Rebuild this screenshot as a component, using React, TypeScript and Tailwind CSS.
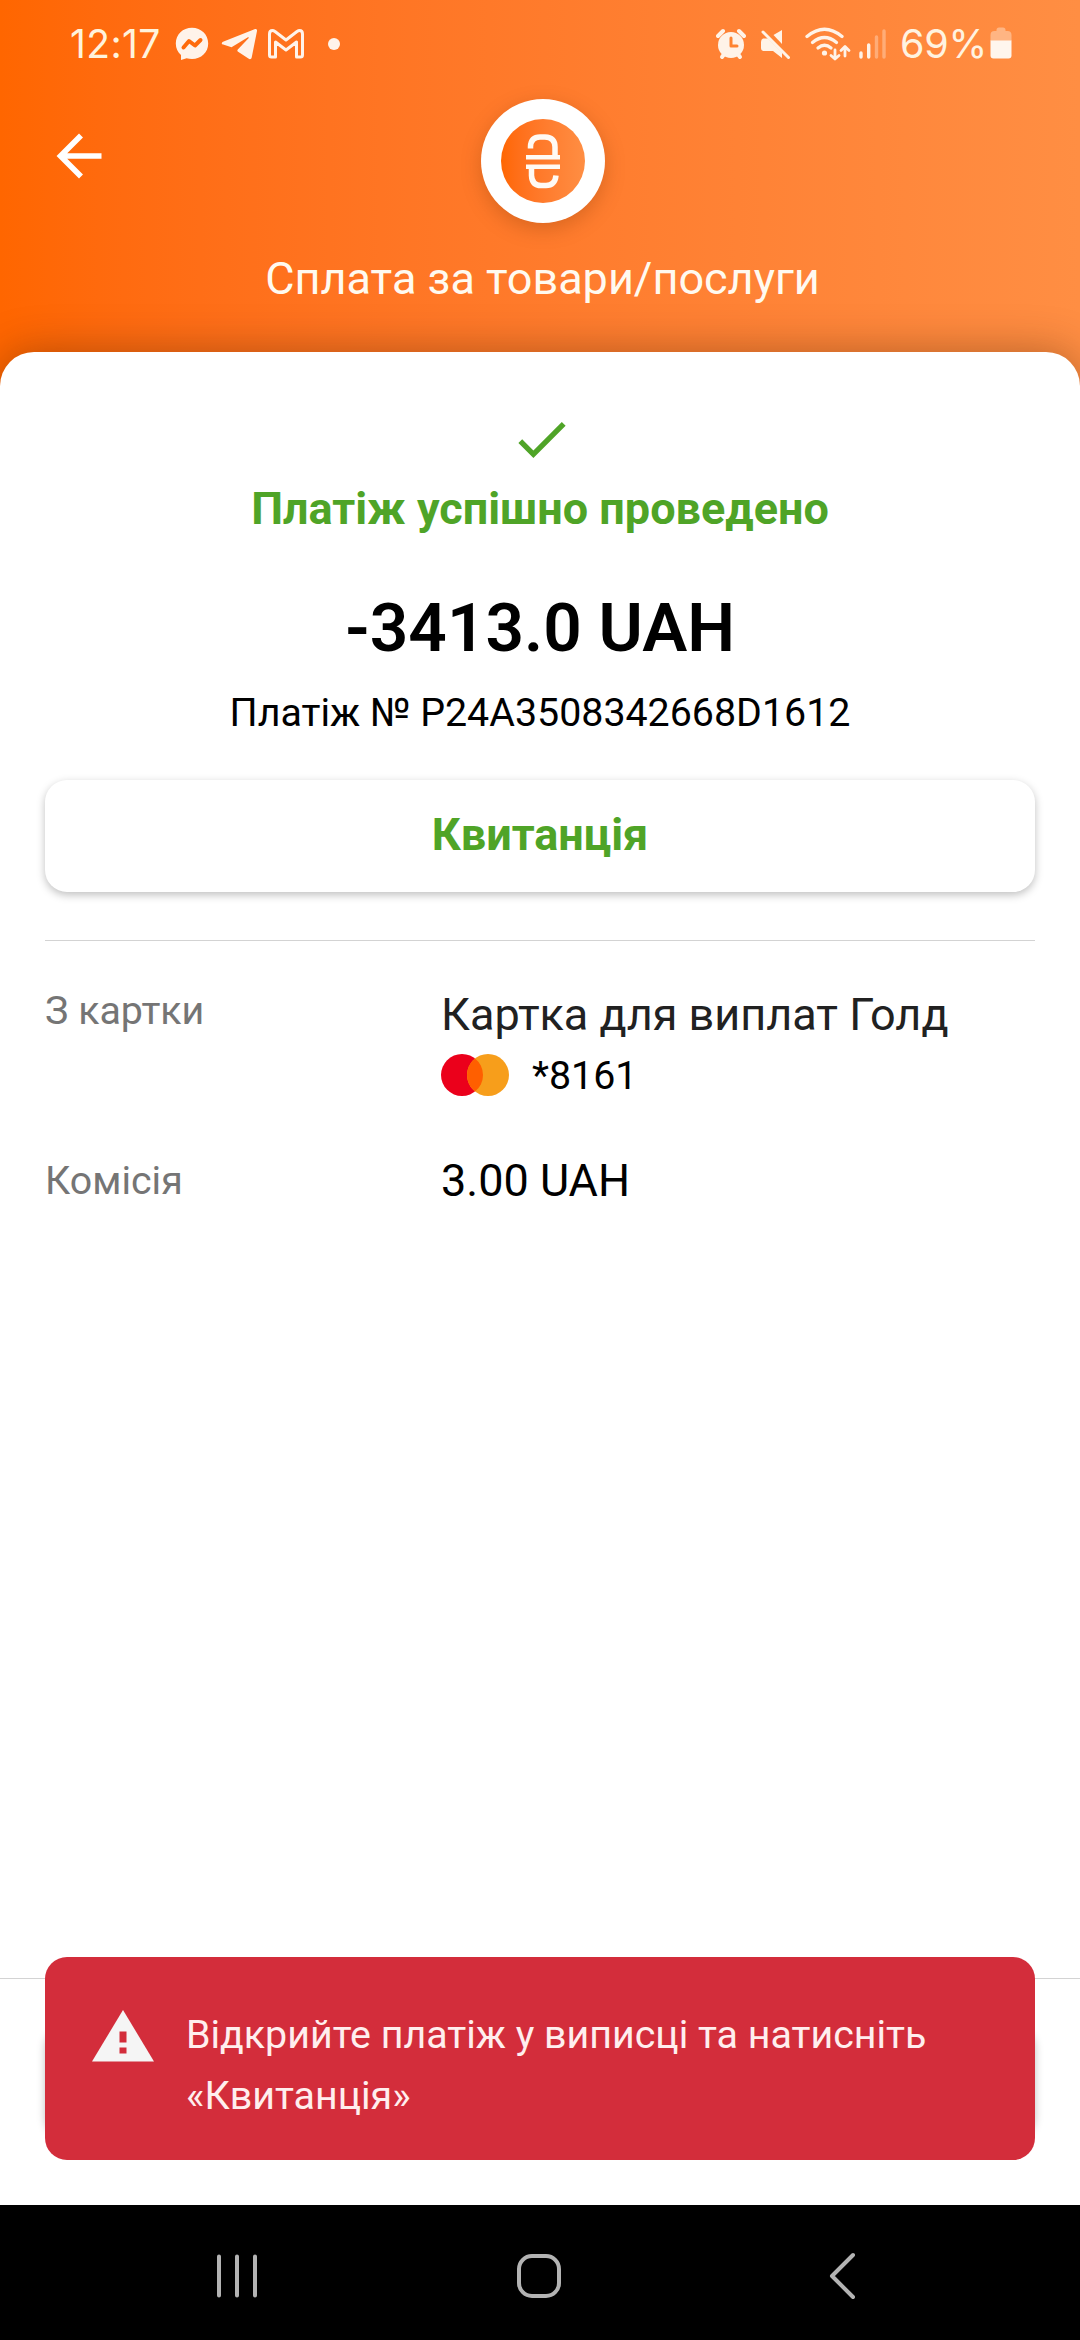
import React from "react";

interface DetailRowProps {
  label: string;
  children: React.ReactNode;
}

function StatusIcons(): JSX.Element {
  return (
    <div className="flex items-center">
      {/* alarm */}
      <svg width="30" height="32" viewBox="0 0 30 32" className="text-[#fff3e8]">
        <path d="M2 8l5-5M28 8l-5-5" stroke="currentColor" strokeWidth="4" strokeLinecap="round" />
        <path d="M6 29l3-4M24 29l-3-4" stroke="currentColor" strokeWidth="4" strokeLinecap="round" />
        <circle cx="15" cy="17" r="13" fill="currentColor" />
        <path d="M15 10v8h6" stroke="#ff8431" strokeWidth="3" fill="none" strokeLinecap="round" strokeLinejoin="round" />
      </svg>
      {/* muted speaker */}
      <svg width="32" height="32" viewBox="0 0 32 32" className="ml-[14px] text-[#fff3e8]">
        <path d="M22 2v14l-8.500-9z" fill="currentColor" />
        <path d="M3 10.500h5L22 24.500V30l-9-7H4q-3 0-3-3v-6q0-3 2-3.500z" fill="currentColor" />
        <path d="M5.500 2.500L31 28" stroke="#ff8636" strokeWidth="2.500" />
        <path d="M3 4l25.500 25.500" stroke="currentColor" strokeWidth="3" strokeLinecap="round" />
      </svg>
      {/* wifi with traffic arrows */}
      <svg width="46" height="34" viewBox="0 0 46 34" className="ml-[13px] text-[#fff3e8]" fill="none" stroke="currentColor">
        <path d="M2 9.500Q19.500-5 37 9.500" strokeWidth="3.300" strokeLinecap="round" />
        <path d="M7.500 15.500Q19.500 5.500 31.500 15.500" strokeWidth="3.300" strokeLinecap="round" />
        <path d="M13 21Q19.500 15.500 26 21" strokeWidth="3.300" strokeLinecap="round" />
        <circle cx="19.500" cy="26" r="2.600" fill="currentColor" stroke="none" />
        <path d="M30 23v9M26 28.500l4 3.500 4-3.500M40 29V20M36 23.500l4-4 4 4" strokeWidth="2.800" strokeLinecap="round" strokeLinejoin="round" />
      </svg>
      {/* signal */}
      <svg width="28" height="32" viewBox="0 0 28 32" className="ml-[8px]" stroke="#fff3e8" strokeWidth="3.400" strokeLinecap="round">
        <path d="M2 25v4M9.700 17v12" />
        <path d="M17.500 9v20M25 3v26" opacity="0.35" />
      </svg>
      <span className="ml-[13px] w-[87px] text-[39.500px] leading-[46px] tracking-[-0.3px] text-[#fff3e0]">69%</span>
      <svg width="22" height="33" viewBox="0 0 22 33" className="ml-[3px]">
        <path d="M6.500 4V3q0-2.500 2.500-2.500h4q2.500 0 2.500 2.500v1h2q4 0 4 4v6H.5V8q0-4 4-4z" fill="#ffb583" />
        <path d="M.5 13.500h21V28.500q0 3-3 3h-15q-3 0-3-3z" fill="#fff6ee" />
      </svg>
    </div>
  );
}

function StatusBar(): JSX.Element {
  return (
    <div className="flex h-[87px] items-center justify-between pr-[68px] pl-[70px] font-['Inter',sans-serif]">
      <div className="flex items-center text-[#fff3ea]">
        <span className="w-[105px] text-[39px] leading-[46px] tracking-[0.4px] text-[#fff3dc]">12:17</span>
        {/* messenger */}
        <svg width="34" height="34" viewBox="0 0 34 34">
          <path d="M17 .8C7.800.8.800 7.500.800 16.500c0 5 2 8.800 5.200 11.600V33l5.600-1.700c1.700.5 3.500.7 5.400.7 9.200 0 16.200-6.700 16.200-15.500S26.200.8 17 .8z" fill="currentColor" />
          <path d="M8.500 20.500l5.500-6.500 6 4.500 5.500-5.500" fill="none" stroke="#ff6b0c" strokeWidth="4" strokeLinecap="round" strokeLinejoin="round" />
        </svg>
        {/* telegram */}
        <svg width="36" height="32" viewBox="0 0 36 32" className="ml-[12px]">
          <path d="M33.500 1.200L2 13.800c-1.800.8-1.600 2.200.2 2.800l8.300 2.600L26.500 9.500c1-.6 1.700 0 1 .7L16.800 21.500c-.7.9-.6 1.700.3 2.300l10.700 7c1.300.7 2.500.3 2.900-1.400L36 3c.3-1.600-1-2.400-2.500-1.800z" fill="currentColor" />
        </svg>
        {/* gmail */}
        <svg width="36" height="30" viewBox="0 0 36 30" className="ml-[11px]" fill="none" stroke="currentColor" strokeWidth="3" strokeLinejoin="round">
          <path d="M1.500 5V26q0 2 2 2h4V13l10.500 8L28.500 13v15h4q2 0 2-2V5q0-3.500-3-3.500-1 0-2.500 1L18 11 7 2.500Q5.500 1.500 4.500 1.500q-3 0-3 3.500z" />
        </svg>
        <span className="ml-[24px] h-[12px] w-[12px] rounded-full bg-current" />
      </div>
      <StatusIcons />
    </div>
  );
}

function HryvniaBadge(): JSX.Element {
  return (
    <div className="flex h-[124px] w-[124px] items-center justify-center rounded-full bg-white shadow-[0_6px_20px_rgba(120,50,0,0.28)]">
      <div className="flex h-[84px] w-[84px] items-center justify-center rounded-full bg-linear-to-r from-[#ff6600] to-[#ff8e43]">
        <svg width="36" height="56" viewBox="0 0 36 56" fill="none" stroke="#fffaf4" strokeWidth="5.500">
          <path d="M5.500 15.500V13.500Q6 4 15 4H20Q30 4.500 30 14V23" />
          <path d="M1 24.200H35M1 33.800H35" strokeWidth="4.400" />
          <path d="M6.500 35V42.500Q7 52.500 16 52.500H21Q30 52.500 31 42.500" />
        </svg>
      </div>
    </div>
  );
}

function DetailRow({ label, children }: DetailRowProps): JSX.Element {
  return (
    <div className="flex">
      <div className="w-[396px] text-[39.375px] leading-[50px] text-[#757575]">{label}</div>
      <div className="flex-1">{children}</div>
    </div>
  );
}

function Mastercard(): JSX.Element {
  return (
    <svg width="68" height="42" viewBox="0 0 68 42">
      <circle cx="21" cy="21" r="21" fill="#eb001b" />
      <circle cx="47" cy="21" r="21" fill="#f79e1b" />
      <path d="M34 4.500a21 21 0 0 1 0 33a21 21 0 0 1 0-33z" fill="#ff5f00" />
    </svg>
  );
}

function Toast(): JSX.Element {
  return (
    <div className="absolute right-[45px] bottom-[45px] left-[45px] flex h-[203px] rounded-[22px] bg-[#d32d3b] pt-[47px] pl-[47px]">
      <svg width="62" height="52" viewBox="0 0 62 52" className="mt-[6px] shrink-0">
        <path d="M31 0L62 51.500H0z" fill="#f5f5f5" />
        <path d="M27.500 21.500h7v11h-7zM27.500 37.500h7v6h-7z" fill="#d32d3b" />
      </svg>
      <p className="ml-[32px] text-[39.375px] leading-[61px] text-[#ffeeee]">
        Відкрийте платіж у виписці та натисніть
        <br />
        «Квитанція»
      </p>
    </div>
  );
}

function NavBar(): JSX.Element {
  return (
    <nav className="relative flex h-[135px] items-center justify-between bg-black pt-[7px] pr-[224px] pl-[216px]">
      <svg width="42" height="46" viewBox="0 0 42 46" stroke="#b3b3b3" strokeWidth="4" strokeLinecap="round">
        <path d="M3 3.500V42.500M21 3.500V42.500M39 3.500V42.500" />
      </svg>
      <svg width="46" height="46" viewBox="0 0 46 46" className="mr-[8px]" fill="none" stroke="#b3b3b3" strokeWidth="4">
        <rect x="3" y="3" width="40" height="40" rx="13" />
      </svg>
      <svg width="28" height="48" viewBox="0 0 28 48" fill="none" stroke="#b3b3b3" strokeWidth="4" strokeLinecap="round" strokeLinejoin="round">
        <path d="M25 3L4 24l21 21" />
      </svg>
    </nav>
  );
}

export default function App(): JSX.Element {
  return (
    <div className="flex h-[2340px] w-[1080px] flex-col overflow-hidden bg-linear-to-r from-[#ff6600] to-[#ff8e43] font-['Roboto',sans-serif]">
      <header className="h-[352px] shrink-0">
        <StatusBar />
        <div className="flex items-start justify-between pr-[50px] pl-[56px] pt-[12px]">
          <button type="button" className="mt-[34px] w-[46px]">
            <svg width="46" height="46" viewBox="0 0 46 46" fill="none" stroke="#ffffff" strokeWidth="5.600">
              <path d="M45.500 23H5M25 2.500L4.500 23 25 43.500" />
            </svg>
          </button>
          <HryvniaBadge />
          <div className="w-[46px]" />
        </div>
        <h1 className="mt-[26px] pl-[5px] text-center text-[45px] leading-[60px] text-[#fffaf0]">Сплата за товари/послуги</h1>
      </header>

      <main className="relative flex flex-1 flex-col rounded-t-[34px] bg-white shadow-[0_0_44px_rgba(60,30,0,0.38)]">
        <section className="flex flex-col items-center px-[45px] pt-[70px]">
          <svg width="48" height="36" viewBox="3.410 5.590 17.590 13.410" className="ml-[3px]" fill="#4fa427">
            <path d="M9 16.170L4.830 12l-1.420 1.410L9 19 21 7l-1.410-1.410z" />
          </svg>
          <p className="mt-[21px] text-[45px] leading-[60px] font-bold text-[#4fa427]">Платіж успішно проведено</p>
          <p className="mt-[49px] text-[67.500px] leading-[80px] font-semibold text-black">-3413.0 UAH</p>
          <p className="mt-[20px] text-[39.375px] leading-[50px] text-black">Платіж № P24A3508342668D1612</p>
          <button
            type="button"
            className="mt-[42px] h-[112px] w-full rounded-[22px] bg-white pb-[3px] text-[45px] leading-[60px] font-bold text-[#4fa427] shadow-[0_3px_9px_rgba(0,0,0,0.25)]"
          >
            Квитанція
          </button>
        </section>

        <section className="mx-[45px] mt-[48px] flex flex-col gap-[60px] border-t border-[#d3d3d3] pt-[45px]">
          <DetailRow label="З картки">
            <p className="mt-[4px] text-[45px] leading-[50px] text-[#212121]">Картка для виплат Голд</p>
            <div className="mt-[14px] flex h-[42px] items-center">
              <Mastercard />
              <span className="ml-[23px] pt-[2px] text-[39.375px] leading-[42px] text-black">*8161</span>
            </div>
          </DetailRow>
          <DetailRow label="Комісія">
            <p className="text-[45px] leading-[50px] text-black">3.00 UAH</p>
          </DetailRow>
        </section>

        <footer className="mt-auto h-[227px] border-t border-[#d3d3d3] px-[45px] pt-[45px]">
          <div className="h-[112px] rounded-[22px] bg-white shadow-[0_3px_9px_rgba(0,0,0,0.25)]" />
        </footer>
        <Toast />
      </main>

      <NavBar />
    </div>
  );
}
